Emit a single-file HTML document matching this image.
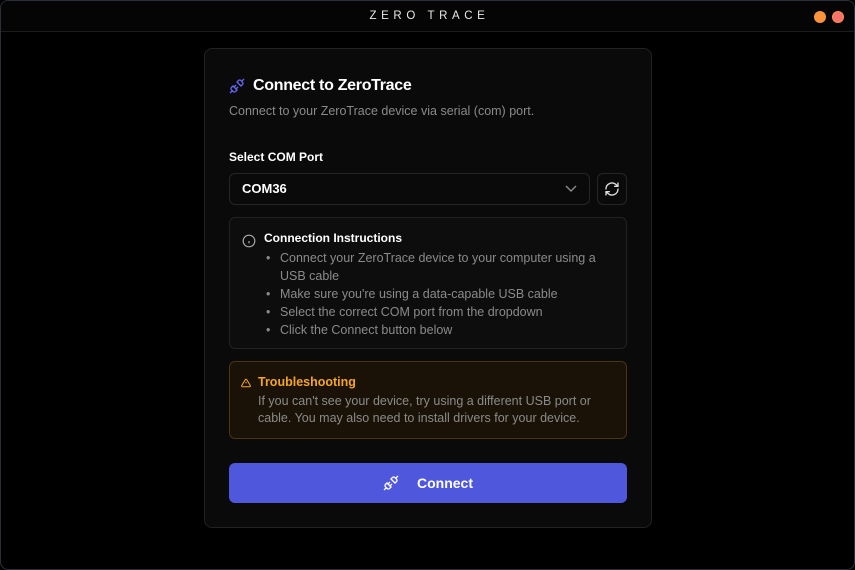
<!DOCTYPE html>
<html><head><meta charset="utf-8"><style>
*{box-sizing:border-box;margin:0;padding:0}
body{width:855px;height:570px;background:#000;font-family:"Liberation Sans",sans-serif;overflow:hidden;position:relative}
.win{position:absolute;inset:0;border:1px solid #2a2f3a;border-radius:8px;background:#000;overflow:hidden}
.tb{height:31px;border-bottom:1px solid #1c1c1c;background:#050505;position:relative}
.title{position:absolute;left:0;right:0;top:9px;text-align:center;color:#e8e8e8;font-size:11.5px;letter-spacing:4.6px;font-weight:300;padding-left:4px}
.dot{position:absolute;top:10px;width:12px;height:12px;border-radius:50%}
.card{position:absolute;left:203px;top:47px;width:448px;height:480px;border:1px solid #222;border-radius:8px;background:#0a0a0a}
.h{position:absolute;left:24px;top:28px;color:#fff;font-size:16px;font-weight:bold;display:flex;align-items:center;gap:8px;letter-spacing:-0.3px}
.sub{position:absolute;left:24px;top:55px;color:#8a8a8a;font-size:12.5px}
.lbl{position:absolute;left:24px;top:101px;color:#fff;font-size:12px;font-weight:bold}
.sel{position:absolute;left:24px;top:124px;width:361px;height:32px;border:1px solid #262626;border-radius:6px;color:#fff;font-size:13px;font-weight:bold;padding:7px 12px}
.ref{position:absolute;left:392px;top:124px;width:30px;height:32px;border:1px solid #262626;border-radius:6px;display:flex;align-items:center;justify-content:center}
.inst{position:absolute;left:24px;top:168px;width:398px;height:132px;border:1px solid #222;border-radius:6px;background:#0d0d0d}
.inst h4{position:absolute;left:34px;top:13px;color:#fff;font-size:12px}
.inst ul{position:absolute;left:34px;top:31px;width:350px;color:#8a8a8a;font-size:12.5px;line-height:18px;list-style:none}
.inst li{padding-left:16px;position:relative}
.inst li:before{content:"•";position:absolute;left:2px}
.tr{position:absolute;left:24px;top:312px;width:398px;height:78px;border:1px solid #4a3510;border-radius:6px;background:#1a1206}
.tr h4{position:absolute;left:28px;top:13px;color:#f5a524;font-size:12.5px}
.tr p{position:absolute;left:28px;top:31px;width:360px;color:#8a8a8a;font-size:12.5px;line-height:17px}
.btn{position:absolute;left:24px;top:414px;width:398px;height:40px;background:#4f57dd;border-radius:6px;color:#fff;font-weight:bold;font-size:14px;display:flex;align-items:center;justify-content:center;gap:18px}
</style></head><body>
<div class="win">
<div class="tb"><div class="title">ZERO TRACE</div>
<div class="dot" style="left:813px;background:#fb923c"></div>
<div class="dot" style="left:831px;background:#f87171;border:1px solid #fb923c"></div></div>
<div class="card">
<div class="h"><svg width="16" height="16" viewBox="0 0 24 24" fill="none" stroke="#6366f1" stroke-width="2" stroke-linecap="round"><path d="M19 5l3-3M2 22l3-3M6.3 20.3a2.4 2.4 0 0 0 3.4 0L12 18l-6-6-2.3 2.3a2.4 2.4 0 0 0 0 3.4zM7.5 13.5L10 11M10.5 16.5L13 14M12 6l6 6 2.3-2.3a2.4 2.4 0 0 0 0-3.4l-2.6-2.6a2.4 2.4 0 0 0-3.4 0z"/></svg>Connect to ZeroTrace</div>
<div class="sub">Connect to your ZeroTrace device via serial (com) port.</div>
<div class="lbl">Select COM Port</div>
<div class="sel">COM36<svg style="position:absolute;right:12px;top:11px" width="12" height="8" viewBox="0 0 12 8" fill="none" stroke="#888" stroke-width="1.5"><path d="M1 1l5 5 5-5"/></svg></div>
<div class="ref"><svg width="16" height="16" viewBox="0 0 24 24" fill="none" stroke="#ddd" stroke-width="2" stroke-linecap="round"><path d="M3 12a9 9 0 0 1 15-6.7L21 8M21 3v5h-5M21 12a9 9 0 0 1-15 6.7L3 16M8 16H3v5"/></svg></div>
<div class="inst"><svg style="position:absolute;left:12px;top:16px" width="14" height="14" viewBox="0 0 24 24" fill="none" stroke="#aaa" stroke-width="2"><circle cx="12" cy="12" r="10"/><path d="M12 16v-4M12 8h.01"/></svg>
<h4>Connection Instructions</h4>
<ul><li>Connect your ZeroTrace device to your computer using a USB cable</li><li>Make sure you're using a data-capable USB cable</li><li>Select the correct COM port from the dropdown</li><li>Click the Connect button below</li></ul></div>
<div class="tr"><svg style="position:absolute;left:11px;top:16px" width="10" height="10" viewBox="0 0 24 24" fill="none" stroke="#f5a524" stroke-width="2.5"><path d="M10.3 3.9L1.8 18a2 2 0 0 0 1.7 3h17a2 2 0 0 0 1.7-3L13.7 3.9a2 2 0 0 0-3.4 0zM12 9v4M12 17h.01"/></svg>
<h4>Troubleshooting</h4>
<p>If you can't see your device, try using a different USB port or cable. You may also need to install drivers for your device.</p></div>
<div class="btn"><svg width="16" height="16" viewBox="0 0 24 24" fill="none" stroke="#fff" stroke-width="2" stroke-linecap="round"><path d="M19 5l3-3M2 22l3-3M6.3 20.3a2.4 2.4 0 0 0 3.4 0L12 18l-6-6-2.3 2.3a2.4 2.4 0 0 0 0 3.4zM7.5 13.5L10 11M10.5 16.5L13 14M12 6l6 6 2.3-2.3a2.4 2.4 0 0 0 0-3.4l-2.6-2.6a2.4 2.4 0 0 0-3.4 0z"/></svg>Connect</div>
</div></div>
</body></html>
